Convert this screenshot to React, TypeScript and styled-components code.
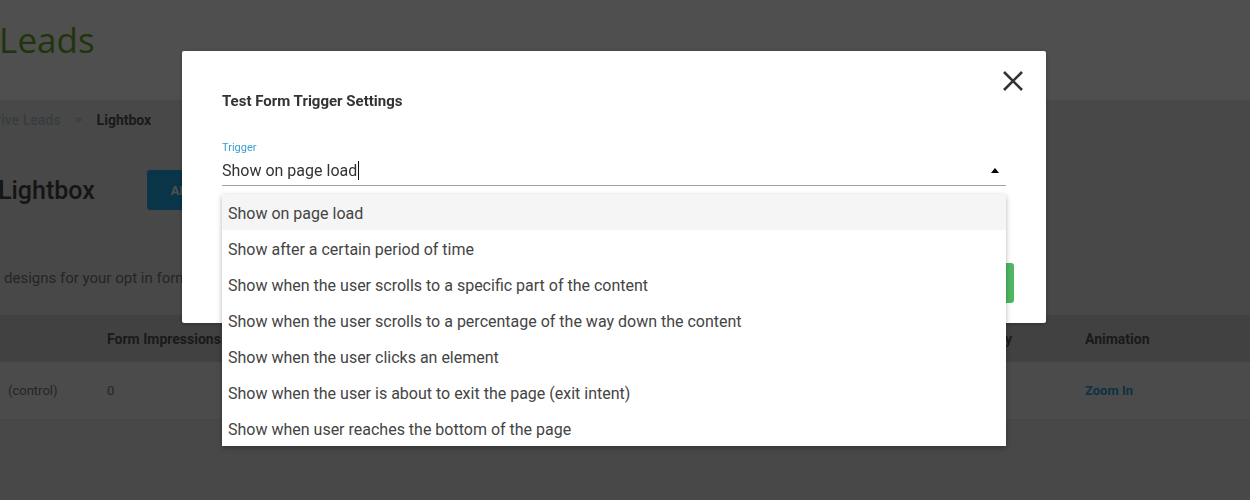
import React from 'react'
import styled, { createGlobalStyle } from 'styled-components'

const GlobalStyle = createGlobalStyle`
    html, body {
        margin: 0;
        padding: 0;
        background: #e8e8e8;
        font-family: Roboto, 'Liberation Sans', sans-serif;
        overflow: hidden;
    }
`

const Page = styled.div`
    min-height: 500px;
    background: #e8e8e8;
`

const Header = styled.header`
    height: 100px;
    background: #ffffff;
    display: flex;
    align-items: center;
`

const Logo = styled.div`
    font-family: 'Open Sans', 'Noto Sans', sans-serif;
    font-size: 35px;
    color: #6aa82a;
    margin-left: -111px;
    padding-bottom: 22px;
`

const Breadcrumbs = styled.nav`
    display: flex;
    align-items: center;
    gap: 15px;
    height: 40px;
    font-size: 14px;
    font-weight: 500;
    margin-left: -20px;
`

const Crumb = styled.span<{ $current?: boolean }>`
    color: ${(p) => (p.$current ? '#555555' : '#b5c3cc')};
    font-weight: ${(p) => (p.$current ? 700 : 500)};
`

const Chevron = styled.span`
    color: #b5c3cc;
    font-size: 12px;
`

const TitleRow = styled.div`
    display: flex;
    align-items: center;
    gap: 52px;
    height: 100px;
`

const Title = styled.h1`
    margin: 0 0 0 -2px;
    font-size: 25px;
    font-weight: 500;
    color: #444444;
`

const AddButton = styled.button`
    height: 40px;
    padding: 0 24px;
    border: none;
    border-radius: 3px;
    background: #20a8e8;
    color: #ffffff;
    font-family: inherit;
    font-size: 13px;
    font-weight: 700;
    text-transform: uppercase;
`

const Intro = styled.p`
    margin: 0;
    height: 75px;
    box-sizing: border-box;
    padding: 28px 0 0 4px;
    font-size: 15px;
    line-height: 20px;
    color: #777777;
`

const Table = styled.div`
    display: grid;
    grid-template-columns: 99px 264px 264px 262px 188px 1fr;
    font-size: 13px;
`

const HeadCell = styled.div`
    height: 47px;
    display: flex;
    align-items: center;
    padding-left: 8px;
    background: #d2d2d2;
    color: #555555;
    font-size: 14px;
    font-weight: 700;
    white-space: nowrap;
`

const Cell = styled.div<{ $link?: boolean }>`
    height: 57px;
    display: flex;
    align-items: center;
    padding-left: 8px;
    background: #f2f2f2;
    border-bottom: 1px solid #dddddd;
    color: ${(p) => (p.$link ? '#2ba0d8' : '#777777')};
    font-weight: ${(p) => (p.$link ? 700 : 400)};
`

const Backdrop = styled.div`
    position: fixed;
    inset: 0;
    background: rgba(0, 0, 0, 0.69);
    padding: 51px 0 0 182px;
`

const Modal = styled.div`
    position: relative;
    width: 864px;
    box-sizing: border-box;
    padding: 40px 40px 20px;
    background: #ffffff;
    border-radius: 2px;
    box-shadow: 0 1px 4px rgba(0, 0, 0, 0.3);
`

const ModalTitle = styled.h2`
    margin: 0;
    font-size: 15px;
    line-height: 20px;
    font-weight: 700;
    color: #333333;
`

const CloseButton = styled.button`
    position: absolute;
    top: 18px;
    right: 21px;
    width: 24px;
    height: 24px;
    padding: 0;
    border: none;
    background: none;
    display: flex;
    align-items: center;
    justify-content: center;
`

const Field = styled.div`
    position: relative;
    margin-top: 30px;
`

const Label = styled.label`
    display: block;
    font-size: 11px;
    line-height: 14px;
    color: #3a9fd0;
`

const InputRow = styled.div`
    height: 31px;
    display: flex;
    align-items: center;
    padding-top: 1px;
    box-sizing: border-box;
    border-bottom: 1px solid #a0a0a0;
    font-size: 16px;
    color: #333333;
`

const Caret = styled.span`
    width: 1px;
    height: 19px;
    margin-left: 1px;
    background: #111111;
`

const Arrow = styled.span`
    margin-left: auto;
    margin-right: 7px;
    width: 0;
    height: 0;
    border-left: 4px solid transparent;
    border-right: 4px solid transparent;
    border-bottom: 5px solid #000000;
`

const Options = styled.ul`
    position: absolute;
    top: 53px;
    left: 0;
    right: 0;
    margin: 0;
    padding: 0;
    list-style: none;
    background: #ffffff;
    box-shadow: 0 2px 5px rgba(0, 0, 0, 0.3);
    z-index: 2;
`

const Option = styled.li<{ $active?: boolean }>`
    height: 36px;
    display: flex;
    align-items: center;
    padding: 2px 0 0 6px;
    box-sizing: border-box;
    font-size: 16px;
    color: #444444;
    background: ${(p) => (p.$active ? '#f5f5f5' : '#ffffff')};
`

const Footer = styled.div`
    display: flex;
    justify-content: flex-end;
    margin-top: 77px;
    margin-right: -8px;
`

const SaveButton = styled.button`
    height: 40px;
    padding: 0 28px;
    border: none;
    border-radius: 3px;
    background: #4cb862;
    color: #ffffff;
    font-family: inherit;
    font-size: 14px;
    font-weight: 700;
`

const triggers = [
    'Show on page load',
    'Show after a certain period of time',
    'Show when the user scrolls to a specific part of the content',
    'Show when the user scrolls to a percentage of the way down the content',
    'Show when the user clicks an element',
    'Show when the user is about to exit the page (exit intent)',
    'Show when user reaches the bottom of the page',
]

const columns = ['', 'Form Impressions', 'Conversions', 'Conversion Rate', 'Display Frequency', 'Animation']
const row = ['(control)', '0', '0', '0%', 'Always', 'Zoom In']

const App = () => {
    return (
        <>
            <GlobalStyle />
            <Page>
                <Header>
                    <Logo>Thrive Leads</Logo>
                </Header>
                <Breadcrumbs>
                    <Crumb>Thrive Leads</Crumb>
                    <Chevron>&gt;</Chevron>
                    <Crumb $current>Lightbox</Crumb>
                </Breadcrumbs>
                <TitleRow>
                    <Title>Lightbox</Title>
                    <AddButton>Add New</AddButton>
                </TitleRow>
                <Intro>designs for your opt in forms and test them against each other.</Intro>
                <Table>
                    {columns.map((c, i) => (
                        <HeadCell key={'h' + i}>{c}</HeadCell>
                    ))}
                    {row.map((c, i) => (
                        <Cell key={'c' + i} $link={i === row.length - 1}>
                            {c}
                        </Cell>
                    ))}
                </Table>
            </Page>
            <Backdrop>
                <Modal>
                    <ModalTitle>Test Form Trigger Settings</ModalTitle>
                    <CloseButton aria-label='Close'>
                        <svg width='22' height='22' viewBox='0 0 22 22'>
                            <path d='M2 2 L20 20 M20 2 L2 20' stroke='#333' strokeWidth='2.6' />
                        </svg>
                    </CloseButton>
                    <Field>
                        <Label>Trigger</Label>
                        <InputRow>
                            Show on page load
                            <Caret />
                            <Arrow />
                        </InputRow>
                        <Options>
                            {triggers.map((t, i) => (
                                <Option key={t} $active={i === 0}>
                                    {t}
                                </Option>
                            ))}
                        </Options>
                    </Field>
                    <Footer>
                        <SaveButton>Save</SaveButton>
                    </Footer>
                </Modal>
            </Backdrop>
        </>
    )
}

export default App
